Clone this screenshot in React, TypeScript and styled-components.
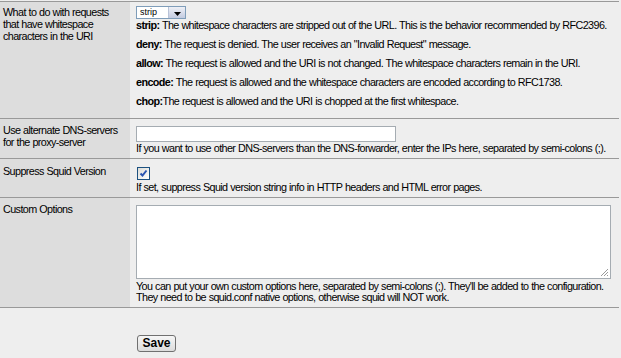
import React from "react";
import styled, { createGlobalStyle } from "styled-components";

const Global = createGlobalStyle`
  html, body { margin: 0; padding: 0; background: #eeeeee; }
  body {
    font-family: "Liberation Sans", Arial, sans-serif;
    font-size: 10.8px;
    letter-spacing: -0.6px;
    word-spacing: 0.3px;
    color: #000;
  }
`;

const Table = styled.div`
  width: 619px;
  margin-top: 1px;
  border-top: 1px solid #999999;
`;

const Row = styled.div<{ $last?: boolean }>`
  display: grid;
  grid-template-columns: 130px 1fr;
  border-bottom: ${(p) => (p.$last ? "none" : "1px solid #999999")};
`;

const Label = styled.div<{ $plain?: boolean; $pt?: number }>`
  background: ${(p) => (p.$plain ? "#eeeeee" : "#dddddd")};
  padding: ${(p) => p.$pt ?? 4}px 4px 4px 3px;
  line-height: 12px;
`;

const Cell = styled.div<{ $pb?: number; $pt?: number }>`
  background: #eeeeee;
  padding: ${(p) => p.$pt ?? 4}px 6px ${(p) => p.$pb ?? 4}px 6px;
  line-height: 12px;
  min-width: 0;
`;

const SelectBox = styled.div`
  display: flex;
  align-items: stretch;
  width: 50px;
  height: 13px;
  box-sizing: border-box;
  border: 1px solid #7f9db9;
  background: #fff;
`;

const SelectText = styled.span`
  flex: 1;
  font-size: 9px;
  letter-spacing: 0;
  line-height: 11px;
  padding-left: 3px;
`;

const SelectButton = styled.span`
  width: 17px;
  background: linear-gradient(#eef0f6, #c3cbe0);
  border-left: 1px solid #b9c3d8;
  display: flex;
  align-items: flex-end;
  justify-content: center;
  padding-bottom: 2px;
  box-sizing: border-box;
`;

const OptionList = styled.div`
  display: flex;
  flex-direction: column;
  gap: 6px;
`;

const Option = styled.div`
  line-height: 13px;
  white-space: nowrap;
`;

const Key = styled.b``;

const TextInput = styled.div`
  width: 260px;
  height: 16px;
  box-sizing: border-box;
  border: 1px solid #a5acb2;
  background: #fff;
  margin-top: 3px;
`;

const Help = styled.div<{ $mt?: number }>`
  margin-top: ${(p) => p.$mt ?? 1}px;
  line-height: 11px;
`;

const Check = styled.div`
  width: 13px;
  height: 13px;
  box-sizing: border-box;
  border: 1px solid #1c5180;
  background: linear-gradient(135deg, #dcdcd7, #ffffff);
  margin: 4px 0 0 1px;
  display: flex;
  align-items: center;
  justify-content: center;
`;

const TextArea = styled.div`
  width: 475px;
  height: 74px;
  box-sizing: border-box;
  border: 1px solid #a5acb2;
  background: #fff;
  position: relative;
  margin-top: 3px;
`;

const Grip = styled.svg`
  position: absolute;
  right: 1px;
  bottom: 1px;
`;

const SaveButton = styled.button`
  font-family: "Liberation Sans", Arial, sans-serif;
  font-weight: bold;
  font-size: 12px;
  letter-spacing: 0;
  height: 17px;
  width: 39px;
  padding: 0;
  line-height: 13px;
  border: 1px solid #707070;
  border-radius: 3px;
  background: linear-gradient(#f6f6f6, #dcdcdc);
  color: #000;
  margin-left: 1px;
  display: block;
`;

export default function App() {
  return (
    <>
      <Global />
      <Table>
        <Row>
          <Label>What to do with requests that have whitespace characters in the URI</Label>
          <Cell $pb={10}>
            <SelectBox>
              <SelectText>strip</SelectText>
              <SelectButton>
                <svg width="7" height="4" viewBox="0 0 7 4">
                  <path d="M0 0h7L3.5 4z" fill="#000" />
                </svg>
              </SelectButton>
            </SelectBox>
            <OptionList>
              <Option><Key>strip:</Key> The whitespace characters are stripped out of the URL. This is the behavior recommended by RFC2396.</Option>
              <Option><Key>deny:</Key> The request is denied. The user receives an "Invalid Request" message.</Option>
              <Option><Key>allow:</Key> The request is allowed and the URI is not changed. The whitespace characters remain in the URI.</Option>
              <Option><Key>encode:</Key> The request is allowed and the whitespace characters are encoded according to RFC1738.</Option>
              <Option><Key>chop:</Key>The request is allowed and the URI is chopped at the first whitespace.</Option>
            </OptionList>
          </Cell>
        </Row>
        <Row>
          <Label $pt={5}>Use alternate DNS-servers for the proxy-server</Label>
          <Cell $pb={4}>
            <TextInput />
            <Help>If you want to use other DNS-servers than the DNS-forwarder, enter the IPs here, separated by semi-colons (;).</Help>
          </Cell>
        </Row>
        <Row>
          <Label $pt={6}>Suppress Squid Version</Label>
          <Cell $pb={4}>
            <Check>
              <svg width="9" height="9" viewBox="0 0 9 9">
                <path d="M1.5 4.5 L3.5 6.5 L7.5 1.5" stroke="#2a54b0" strokeWidth="2" fill="none" />
              </svg>
            </Check>
            <Help $mt={2}>If set, suppress Squid version string info in HTTP headers and HTML error pages.</Help>
          </Cell>
        </Row>
        <Row>
          <Label $pt={5}>Custom Options</Label>
          <Cell $pb={4}>
            <TextArea>
              <Grip width="10" height="10" viewBox="0 0 10 10">
                <path d="M9 2L2 9M9 5L5 9M9 8L8 9" stroke="#9a9a9a" strokeWidth="1" />
              </Grip>
            </TextArea>
            <Help $mt={2}>
              You can put your own custom options here, separated by semi-colons (;). They'll be added to the configuration.
              <br />
              They need to be squid.conf native options, otherwise squid will NOT work.
            </Help>
          </Cell>
        </Row>
        <Row $last>
          <Label $plain />
          <Cell $pt={27} $pb={6}>
            <SaveButton>Save</SaveButton>
          </Cell>
        </Row>
      </Table>
    </>
  );
}
